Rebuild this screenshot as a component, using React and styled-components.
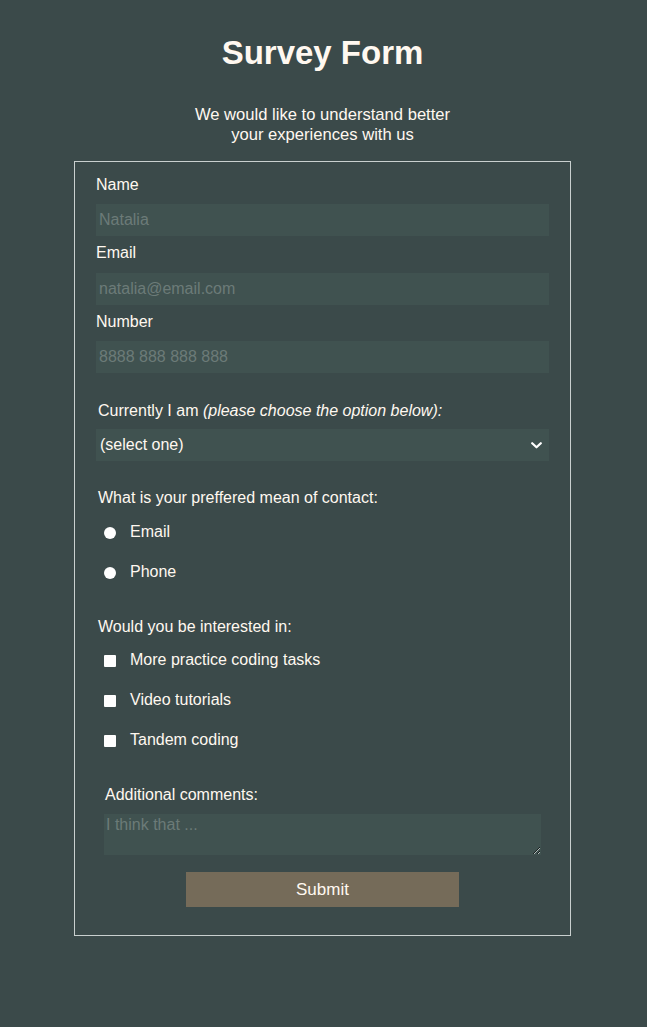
import React from "react";
import styled, { createGlobalStyle } from "styled-components";

const Global = createGlobalStyle`
  html, body { margin: 0; padding: 0; }
  body {
    background: #3b4a4a;
    color: #fff8f0;
    font-family: "Liberation Sans", Arial, sans-serif;
    font-size: 16px;
  }
  * { box-sizing: border-box; }
`;

const Page = styled.main`
  display: flex;
  flex-direction: column;
  align-items: center;
  padding: 34px 2px 91px 0;
`;

const Title = styled.h1`
  margin: 0;
  font-size: 33px;
  line-height: 38px;
  font-weight: 700;
  text-align: center;
`;

const Description = styled.p`
  margin: 33px 0 0;
  max-width: 280px;
  text-align: center;
  line-height: 20px;
  font-size: 16.6px;
`;

const Form = styled.form`
  margin-top: 16px;
  width: 497px;
  border: 1px solid #c9d0cf;
  padding: 14px 21px 28px;
  display: flex;
  flex-direction: column;
`;

const Field = styled.div`
  display: flex;
  flex-direction: column;
  & + & { margin-top: 8px; }
`;

const Label = styled.label`
  display: block;
  line-height: 18.4px;
  margin-bottom: 10px;
  padding-top: 1px;
  margin-top: -1px;
  padding-left: ${(p) => p.$indent || 0}px;
`;

const inputBase = `
  width: 100%;
  border: none;
  outline: none;
  background: #405250;
  color: #fff8f0;
  font-family: "Liberation Sans", Arial, sans-serif;
  font-size: 16px;
  &::placeholder { color: #6c7b78; opacity: 1; }
`;

const Input = styled.input`
  ${inputBase}
  height: 32px;
  padding: 0 3px;
`;

const Section = styled.section`
  margin-top: ${(p) => p.$top}px;
  display: flex;
  flex-direction: column;
`;

const Question = styled.div`
  line-height: 18.4px;
  padding-left: 2px;
`;

const SelectWrap = styled.div`
  position: relative;
  margin-top: 8px;
`;

const Select = styled.select`
  ${inputBase}
  appearance: none;
  -webkit-appearance: none;
  height: 32px;
  padding: 0 4px;
  display: block;
  & option { color: #000; background: #fff; }
`;

const Chevron = styled.svg`
  position: absolute;
  right: 7px;
  top: 13px;
  pointer-events: none;
`;

const Options = styled.div`
  margin-top: ${(p) => p.$top}px;
  display: flex;
  flex-direction: column;
  gap: 21.6px;
`;

const OptionRow = styled.label`
  display: flex;
  align-items: center;
  line-height: 18.4px;
`;

const Radio = styled.input.attrs({ type: "radio" })`
  appearance: none;
  -webkit-appearance: none;
  width: 12px;
  height: 12px;
  margin: 2px 14px 0 8px;
  border-radius: 50%;
  background: #ffffff;
  flex: none;
`;

const Checkbox = styled.input.attrs({ type: "checkbox" })`
  appearance: none;
  -webkit-appearance: none;
  width: 12px;
  height: 12px;
  margin: 2px 14px 0 8px;
  border-radius: 1px;
  background: #ffffff;
  flex: none;
`;

const TextArea = styled.textarea`
  ${inputBase}
  display: block;
  height: 41px;
  margin: 0 8px;
  width: calc(100% - 16px);
  padding: 2px;
  resize: both;
  line-height: 18.4px;
`;

const Submit = styled.button`
  align-self: center;
  margin-top: 17px;
  width: 273px;
  height: 35px;
  border: none;
  background: #756b59;
  color: #fff8f0;
  font-family: "Liberation Sans", Arial, sans-serif;
  font-size: 17px;
  cursor: pointer;
`;

export default function App() {
  return (
    <>
      <Global />
      <Page>
        <Title>Survey Form</Title>
        <Description>We would like to understand better your experiences with us</Description>
        <Form onSubmit={(e) => e.preventDefault()}>
          <Field>
            <Label htmlFor="name">Name</Label>
            <Input id="name" type="text" placeholder="Natalia" />
          </Field>
          <Field>
            <Label htmlFor="email">Email</Label>
            <Input id="email" type="email" placeholder="natalia@email.com" />
          </Field>
          <Field>
            <Label htmlFor="number">Number</Label>
            <Input id="number" type="text" placeholder="8888 888 888 888" />
          </Field>

          <Section $top={29}>
            <Question>
              Currently I am <em>(please choose the option below):</em>
            </Question>
            <SelectWrap>
              <Select defaultValue="">
                <option value="">(select one)</option>
                <option value="student">Student</option>
                <option value="work">Working</option>
                <option value="other">Other</option>
              </Select>
              <Chevron width="11" height="7" viewBox="0 0 11 7">
                <path d="M1.2 1.2 L5.5 5.3 L9.8 1.2" fill="none" stroke="#ffffff" strokeWidth="2.2" strokeLinecap="round" strokeLinejoin="round" />
              </Chevron>
            </SelectWrap>
          </Section>

          <Section $top={28.5}>
            <Question>What is your preffered mean of contact:</Question>
            <Options $top={15}>
              <OptionRow>
                <Radio name="contact" value="email" />
                Email
              </OptionRow>
              <OptionRow>
                <Radio name="contact" value="phone" />
                Phone
              </OptionRow>
            </Options>
          </Section>

          <Section $top={36.6}>
            <Question>Would you be interested in:</Question>
            <Options $top={15}>
              <OptionRow>
                <Checkbox value="tasks" />
                More practice coding tasks
              </OptionRow>
              <OptionRow>
                <Checkbox value="video" />
                Video tutorials
              </OptionRow>
              <OptionRow>
                <Checkbox value="tandem" />
                Tandem coding
              </OptionRow>
            </Options>
          </Section>

          <Section $top={36.6}>
            <Label htmlFor="comments" $indent={9}>Additional comments:</Label>
            <TextArea id="comments" placeholder="I think that ..." />
          </Section>

          <Submit type="submit">Submit</Submit>
        </Form>
      </Page>
    </>
  );
}
